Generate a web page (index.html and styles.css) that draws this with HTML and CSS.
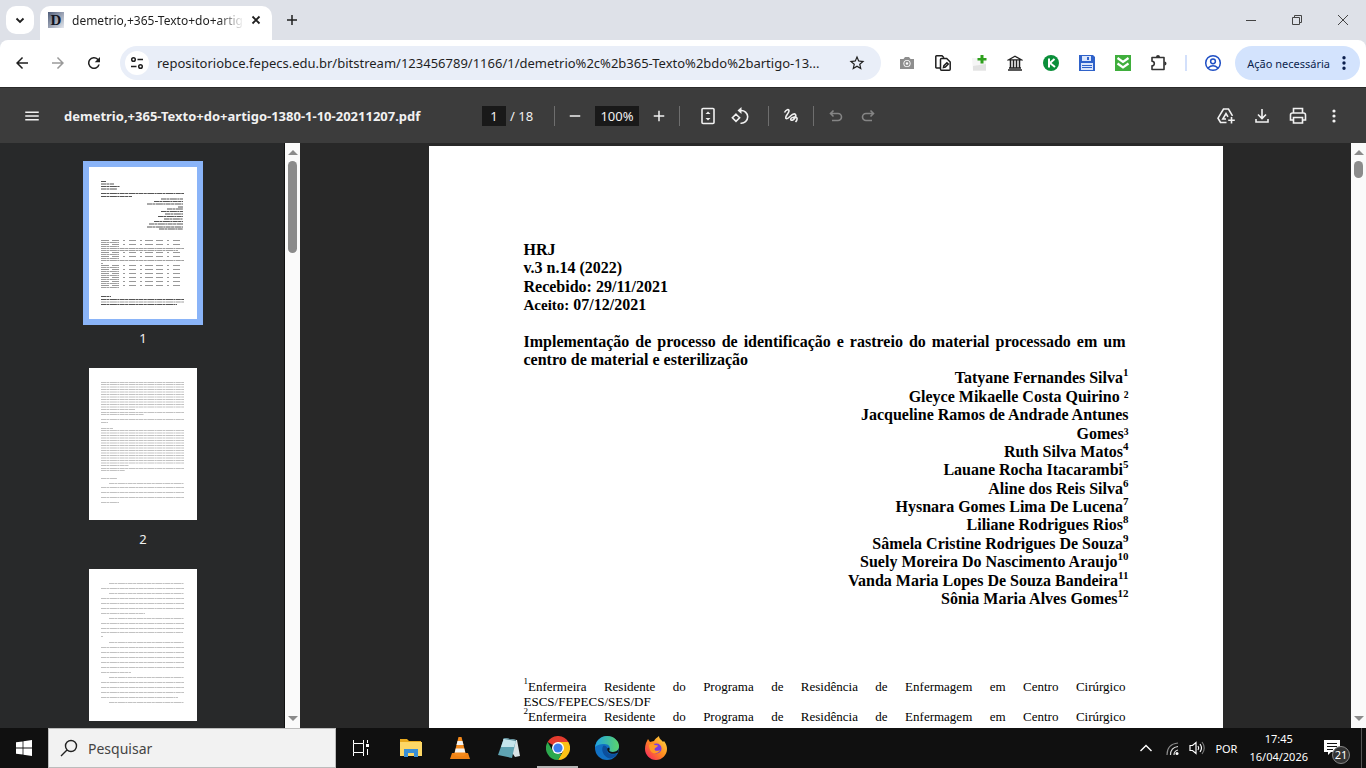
FILE: index.html
```html
<!DOCTYPE html>
<html lang="pt-BR">
<head>
  <meta charset="UTF-8">
  <meta name="viewport" content="width=device-width, initial-scale=1.0">
  <title>demetrio,+365-Texto+do+artigo-1380-1-10-20211207.pdf</title>
  <link rel="stylesheet" href="styles.css">
</head>

<body>
  <!-- Tabs -->
  <header class="tab-strip">
    <button class="tab-search" aria-label="Pesquisar guias">
      <svg width="16" height="16" viewBox="0 0 16 16"><path class="line bold" d="M4.5 6.5 8 10l3.500-3.500"/></svg>
    </button>
    <div class="tab">
      <svg width="16" height="16" viewBox="0 0 16 16">
        <defs>
          <linearGradient id="fav" x1="0" y1="0" x2="1" y2="1">
            <stop offset="0" stop-color="#4d5b78"/>
            <stop offset="1" stop-color="#e6e9ef"/>
          </linearGradient>
        </defs>
        <rect width="16" height="16" fill="url(#fav)"/>
        <text class="favicon-letter" x="8" y="13" text-anchor="middle">D</text>
      </svg>
      <span class="tab-title">demetrio,+365-Texto+do+artig</span>
      <button class="tab-close" aria-label="Fechar">
        <svg width="16" height="16" viewBox="0 0 16 16"><path class="line bold" d="M4.500 4.500l7 7M11.500 4.500l-7 7"/></svg>
      </button>
    </div>
    <button class="new-tab" aria-label="Nova guia">
      <svg width="16" height="16" viewBox="0 0 16 16"><path class="line" d="M8 3v10M3 8h10"/></svg>
    </button>
    <div class="window-controls">
      <button aria-label="Minimizar"><svg width="12" height="12" viewBox="0 0 12 12"><path class="hair" d="M1 6.500h10"/></svg></button>
      <button aria-label="Restaurar"><svg width="12" height="12" viewBox="0 0 12 12"><path class="hair" d="M1.500 3.500h7v7h-7zM3.500 3.500v-2h7v7h-2"/></svg></button>
      <button aria-label="Fechar janela"><svg width="12" height="12" viewBox="0 0 12 12"><path class="hair" d="M1 1l10 10M11 1 1 11"/></svg></button>
    </div>
  </header>

  <!-- Address bar -->
  <nav class="toolbar">
    <button class="tool" aria-label="Voltar"><svg width="18" height="18" viewBox="0 0 24 24"><path d="M20 11H7.830l5.590-5.590L12 4l-8 8 8 8 1.410-1.410L7.830 13H20z"/></svg></button>
    <button class="tool" aria-label="Avançar" disabled><svg width="18" height="18" viewBox="0 0 24 24"><path d="M4 11h12.170l-5.590-5.590L12 4l8 8-8 8-1.410-1.410L16.170 13H4z"/></svg></button>
    <button class="tool" aria-label="Recarregar"><svg width="18" height="18" viewBox="0 0 24 24"><path d="M17.650 6.350A8 8 0 1 0 19.730 14h-2.080A6 6 0 1 1 16.220 7.780L13 11h7V4z"/></svg></button>
    <div class="omnibox">
      <button class="site-info" aria-label="Informações do site">
        <svg width="16" height="16" viewBox="0 0 16 16"><g class="line"><circle cx="4.500" cy="4.500" r="1.800"/><path d="M8.500 4.500H14M2 11.500h5.500"/><circle cx="11.500" cy="11.500" r="1.800"/></g></svg>
      </button>
      <input class="url" type="text" aria-label="Endereço" value="repositoriobce.fepecs.edu.br/bitstream/123456789/1166/1/demetrio%2c%2b365-Texto%2bdo%2bartigo-13...">
      <button class="star" aria-label="Favoritar"><svg width="18" height="18" viewBox="0 0 24 24"><path d="M22 9.240l-7.190-.620L12 2 9.190 8.630 2 9.240l5.460 4.730L5.820 21 12 17.270 18.180 21l-1.630-7.030zM12 15.400l-3.760 2.270 1-4.280-3.320-2.880 4.380-.380L12 6.100l1.710 4.040 4.380.380-3.320 2.880 1 4.280z"/></svg></button>
    </div>
    <button class="tool" aria-label="Captura de tela">
      <svg width="16" height="16" viewBox="0 0 16 16"><path fill="#8e8e8e" d="M1 4h3.500L6 2h4l1.500 2H15v10H1z"/><circle cx="8" cy="8.500" r="3.600" fill="#fff"/><circle cx="8" cy="8.500" r="2" fill="none" stroke="#8e8e8e" stroke-width="1.400"/></svg>
    </button>
    <button class="tool" aria-label="Editar páginas">
      <svg width="18" height="18" viewBox="0 0 18 18"><g class="line"><path d="M6 14H2.500q-.700 0-.700-.700V2.500q0-.700.700-.700H8l2 2"/><path d="M6.500 5.500q0-1 1-1h5.200l3.500 3.500v7.200q0 1-1 1H7.500q-1 0-1-1z"/><path d="M9.500 13.500l.400-1.800 3-3 1.400 1.400-3 3z"/></g></svg>
    </button>
    <button class="tool" aria-label="Adicionar">
      <svg width="18" height="18" viewBox="0 0 18 18"><path fill="#f5f5f5" d="M2 4h14v13H3z"/><path fill="#e2e2e2" d="M3 12l13-2v6.500H3z"/><path fill="#2ea01d" d="M10.500 1h3v3h3v2.500h-3v3h-3v-3h-3V4h3z"/></svg>
    </button>
    <button class="tool" aria-label="Biblioteca">
      <svg width="16" height="16" viewBox="0 0 16 16"><path fill="none" stroke="#222" stroke-width="1.300" d="M1.700 4.800 8 1.200l6.300 3.600z"/><path fill="none" stroke="#222" stroke-width="1.500" d="M3.500 5v8M6.500 5v8M9.500 5v8M12.500 5v8M2 13h12M1 15h14"/></svg>
    </button>
    <button class="tool" aria-label="K">
      <svg width="16" height="16" viewBox="0 0 16 16"><circle cx="8" cy="8" r="8" fill="#0b8f3a"/><path fill="none" stroke="#fff" stroke-width="2" d="M6 3.500v9M11.500 4 7 8l5 4"/></svg>
    </button>
    <button class="tool" aria-label="Salvar">
      <svg width="16" height="16" viewBox="0 0 16 16"><path fill="#2f62c9" d="M0 0h14l2 2v14H0z"/><path fill="#dbe6fb" d="M3 1h9v5H3zM2 8h12v7H2z"/><path fill="#2f62c9" d="M8 2h2v3H8zM3 10h10v1H3zM3 12h10v1H3z"/></svg>
    </button>
    <button class="tool" aria-label="Baixar tudo">
      <svg width="16" height="16" viewBox="0 0 16 16"><rect width="16" height="16" fill="#3fae3c"/><path fill="none" stroke="#fff" stroke-width="2.200" d="M2.500 3 8 7l5.500-4M2.500 8.500 8 12.500l5.500-4"/></svg>
    </button>
    <button class="tool" aria-label="Extensões">
      <svg width="18" height="18" viewBox="0 0 18 18"><path fill="none" stroke="#333" stroke-width="1.600" stroke-linejoin="round" d="M2 3.500h12v12H2v-3.700a2.300 2.300 0 0 0 0-4.600z"/><path fill="#333" d="M6 3a2 2 0 0 1 4 0zM14.500 7.500a2 2 0 0 1 0 4z"/></svg>
    </button>
    <span class="divider"></span>
    <button class="tool" aria-label="Perfil">
      <svg width="18" height="18" viewBox="0 0 18 18"><g fill="none" stroke="#1f4fc4" stroke-width="1.500"><circle cx="9" cy="9" r="7.300"/><circle cx="9" cy="7.300" r="2.400"/><path d="M4 14q5-4.500 10 0"/></g></svg>
    </button>
    <button class="action-needed">
      Ação necessária
      <svg width="4" height="16" viewBox="0 0 4 16"><path fill="#0b1f4d" d="M2 1a1.700 1.700 0 1 1 0 3.400A1.700 1.700 0 0 1 2 1m0 5.300a1.700 1.700 0 1 1 0 3.400 1.700 1.700 0 0 1 0-3.400m0 5.300a1.700 1.700 0 1 1 0 3.400 1.700 1.700 0 0 1 0-3.400"/></svg>
    </button>
  </nav>

  <!-- PDF viewer toolbar -->
  <div class="pdf-bar">
    <div class="pdf-start">
      <button class="pdf-btn" aria-label="Menu"><svg width="18" height="18" viewBox="0 0 24 24"><path d="M3 18h18v-2H3zm0-5h18v-2H3zm0-7v2h18V6z"/></svg></button>
      <span class="pdf-title">demetrio,+365-Texto+do+artigo-1380-1-10-20211207.pdf</span>
    </div>
    <div class="pdf-center">
      <input class="pdf-input page-no" type="text" value="1" aria-label="Número da página">
      <span class="page-total">/ 18</span>
      <span class="sep sep-zoom"></span>
      <button class="pdf-btn" aria-label="Diminuir zoom"><svg width="18" height="18" viewBox="0 0 24 24"><path d="M5 11h14v2H5z"/></svg></button>
      <input class="pdf-input zoom" type="text" value="100%" aria-label="Zoom">
      <button class="pdf-btn" aria-label="Aumentar zoom"><svg width="18" height="18" viewBox="0 0 24 24"><path d="M19 13h-6v6h-2v-6H5v-2h6V5h2v6h6z"/></svg></button>
      <span class="sep sep-fit"></span>
      <button class="pdf-btn" aria-label="Ajustar à página"><svg width="20" height="20" viewBox="0 0 20 20"><rect class="stroke" x="4" y="2.500" width="12" height="15" rx="1"/><path d="M7.500 8 10 5.500 12.500 8zM7.500 12l2.500 2.500 2.500-2.500z"/></svg></button>
      <button class="pdf-btn" aria-label="Girar"><svg width="20" height="20" viewBox="0 0 20 20"><path class="stroke" d="M6 8.200l3.600 3.600L6 15.400l-3.600-3.600zM10.500 4.500a6.400 6.400 0 1 1 0 12.700"/><path d="M11.500 1v7L7.500 4.500z"/></svg></button>
      <span class="sep sep-annotate"></span>
      <button class="pdf-btn" aria-label="Desenhar"><svg width="20" height="20" viewBox="0 0 20 20"><path class="stroke" d="M3.500 6.500C5 3.500 8 2.500 8 5c0 2.500-4.500 5-3 7.500 2.500 2 5.500-6 9-4.500 2.500 2-2 7.500-4 6-1.500-2 3-3.500 5.500-2.500 1.500.800 0 3.500-1 4.500"/></svg></button>
      <span class="sep sep-undo"></span>
      <button class="pdf-btn" aria-label="Desfazer" disabled><svg width="20" height="20" viewBox="0 0 20 20"><path class="stroke" d="M7.500 4.500 4.500 7.500l3 3M4.500 7.500h7.500a3.500 3.500 0 0 1 0 7H6"/></svg></button>
      <button class="pdf-btn" aria-label="Refazer" disabled><svg width="20" height="20" viewBox="0 0 20 20"><path class="stroke" d="M12.500 4.500l3 3-3 3M15.500 7.500H8a3.500 3.500 0 0 0 0 7h6"/></svg></button>
    </div>
    <div class="pdf-end">
      <button class="pdf-btn" aria-label="Salvar no Drive"><svg width="20" height="20" viewBox="0 0 20 20"><path class="stroke" d="M10.500 16.500H4.500L2 12.200 7.500 3h5l4 6.800M10 13H6.800L10 7.500l2 3.300M15.500 11v6.500M12.200 14.200h6.600"/></svg></button>
      <button class="pdf-btn" aria-label="Baixar"><svg width="20" height="20" viewBox="0 0 20 20"><path class="stroke" d="M10 3v9M6 8.500l4 4 4-4M4 13v3h12v-3"/></svg></button>
      <button class="pdf-btn" aria-label="Imprimir"><svg width="20" height="20" viewBox="0 0 20 20"><path class="stroke" d="M5.500 6.500v-4h9v4M5.500 14H2.500V9q0-2 2-2h11q2 0 2 2v5h-3M5.500 11.500h9v5.500h-9z"/></svg></button>
      <button class="pdf-btn" aria-label="Mais ações"><svg width="20" height="20" viewBox="0 0 20 20"><circle cx="10" cy="5" r="1.600"/><circle cx="10" cy="10" r="1.600"/><circle cx="10" cy="15" r="1.600"/></svg></button>
    </div>
  </div>

  <main class="viewer">
    <aside class="sidebar">
      <div class="thumbs">
        <a class="thumb selected" href="#p1">
          <svg class="sheet" viewBox="0 0 108 152">
            <path class="ink dark" d="M12 14.500h5M12 17h13M12 19.500h19M12 22h16M12 26.500h83M12 29.500h31M72 32h22M65 34.500h29M58 37h36M89 40h5M78 42h16M72 44.500h22M76 47h18M69 49.500h25M75 52h19M65 54.500h29M60 57h34M58 60h36M70 62h24"/>
            <path class="ink spaced" d="M12 73.500h83M12 77.500h83M12 85.500h83M12 89.500h83M12 98.500h83M12 102.500h83M12 106.500h83M12 110.500h83M12 114.500h83M12 118.500h83"/>
            <path class="ink mid" d="M12 75.500h18M12 79.500h18M12 81.500h83M12 83.500h77M12 87.500h18M12 91.500h18M12 93.500h83M12 96.500h2M12 100.500h18M12 104.500h18M12 108.500h18M12 112.500h18M12 116.500h18M12 120.500h18"/>
            <path class="ink dark" d="M12 129.500h10M12 132.500h83M12 137.500h76"/>
            <path class="ink mid" d="M12 135h83"/>
          </svg>
          <span class="thumb-no">1</span>
        </a>
        <a class="thumb" href="#p2">
          <svg class="sheet" viewBox="0 0 108 152">
            <path class="ink" d="M12 14.500h83M12 16.500h83M12 19h83M12 21.500h83M12 24h83M12 26.500h83M12 29h83M12 31.500h83M12 34h83M12 36.500h83M12 39h83M12 41.500h34M12 44.500h83M12 46.500h43M12 51.500h83M12 54.500h7M12 60.500h12M12 62.500h83M12 65h83M12 67.500h83M12 70h83M12 72.500h83M12 75h83M12 77.500h83M12 80h83M12 82.500h83M12 85h83M12 87.500h83M12 90h83M12 92.500h83M12 95h83M12 97.500h28M12 100.500h83M12 102.500h24M12 110.500h16M20 115.500h75M12 119.500h83M12 124.500h83M12 129.500h83M12 134.500h18"/>
          </svg>
          <span class="thumb-no">2</span>
        </a>
        <a class="thumb" href="#p3" aria-label="3">
          <svg class="sheet" viewBox="0 0 108 152">
            <path class="ink" d="M20 14.500h75M12 19.500h83M20 24.500h75M12 29.500h83M12 34.500h83M12 39.500h83M12 44.500h44M20 49.500h75M12 54.500h83M12 59.500h83M12 63.500h82M12 67.500h2M20 73.500h75M12 78.500h83M12 83.500h83M12 88.500h83M12 93.500h83M12 98.500h83M12 103.500h30M20 108.500h75M12 113.500h83M12 118.500h83M12 123.500h83M12 128.500h77M20 133.500h75"/>
          </svg>
        </a>
      </div>
      <div class="scrollbar">
        <span class="arrow up"></span>
        <span class="grip grip-long"></span>
        <span class="arrow down"></span>
      </div>
    </aside>

    <section class="stage">
      <article class="page" id="p1">
        <p>HRJ<br>v.3 n.14 (2022)<br>Recebido: 29/11/2021<br><span class="accepted">Aceito:</span> 07/12/2021</p>
        <h1>Implementação de processo de identificação e rastreio do material processado em um centro de material e esterilização</h1>
        <ul class="authors">
          <li>Tatyane Fernandes Silva<sup>1</sup></li>
          <li>Gleyce Mikaelle Costa Quirino ²</li>
          <li>Jacqueline Ramos de Andrade Antunes</li>
          <li>Gomes³</li>
          <li>Ruth Silva Matos<sup>4</sup></li>
          <li>Lauane Rocha Itacarambi<sup>5</sup></li>
          <li>Aline dos Reis Silva<sup>6</sup></li>
          <li>Hysnara Gomes Lima De Lucena<sup>7</sup></li>
          <li>Liliane Rodrigues Rios<sup>8</sup></li>
          <li>Sâmela Cristine Rodrigues De Souza<sup>9</sup></li>
          <li>Suely Moreira Do Nascimento Araujo<sup>10</sup></li>
          <li>Vanda Maria Lopes De Souza Bandeira<sup>11</sup></li>
          <li>Sônia Maria Alves Gomes<sup>12</sup></li>
        </ul>
        <div class="notes">
          <p><span class="spread"><sup>1</sup>Enfermeira Residente do Programa de Residência de Enfermagem em Centro Cirúrgico</span> ESCS/FEPECS/SES/DF</p>
          <p><span class="spread"><sup>2</sup>Enfermeira Residente do Programa de Residência de Enfermagem em Centro Cirúrgico</span> ESCS/FEPECS/SES/DF</p>
        </div>
      </article>
    </section>
    <div class="scrollbar">
      <span class="arrow up"></span>
      <span class="grip grip-short"></span>
      <span class="arrow down"></span>
    </div>
  </main>

  <!-- Windows taskbar -->
  <footer class="taskbar">
    <button class="start" aria-label="Iniciar"><svg width="16" height="16" viewBox="0 0 16 16"><path fill="#fff" d="M0 2.300 6.600 1.400v6.200H0zM7.400 1.300 16 0v7.600H7.400zM0 8.400h6.600v6.200L0 13.700zM7.400 8.400H16V16l-8.600-1.300z"/></svg></button>
    <label class="search">
      <svg width="20" height="20" viewBox="0 0 20 20"><path fill="none" stroke="#222" stroke-width="1.400" d="M8 12 2 18M12 2.500a5.500 5.500 0 1 1 0 11 5.500 5.500 0 0 1 0-11z"/></svg>
      <input type="text" placeholder="Pesquisar" aria-label="Pesquisar">
    </label>
    <button class="task-view" aria-label="Visão de tarefas"><svg width="18" height="18" viewBox="0 0 18 18"><path fill="none" stroke="#fff" d="M1.500 1v3.500h10V1M1.500 17v-3.500h10V17M1.500 4.500v9M11.500 4.500v9M15.500 1v3M15.500 10v6"/><path fill="#fff" d="M14 5h3v3h-3z"/></svg></button>
    <button class="app" aria-label="Explorador de Arquivos"><svg width="24" height="24" viewBox="0 0 24 24"><path fill="#e8a91e" d="M1 3h7l2 2h12v3H1z"/><path fill="#fdd766" d="M1 6h22v14H1z"/><path fill="#3a8fd6" d="M5 13h14v8h-4v-4H9v4H5z"/></svg></button>
    <button class="app" aria-label="VLC"><svg width="24" height="24" viewBox="0 0 24 24"><path fill="#f08113" d="M4 17h16l2 6H2z"/><path fill="#f58a1c" d="M10.500 1h3L18 19q-6 3-12 0z"/><path fill="#f3f3f3" d="M9.500 5h5l1 4h-7zM7.700 12.500h8.600l1 4H6.700z"/></svg></button>
    <button class="app" aria-label="Bloco de notas"><svg width="24" height="24" viewBox="0 0 24 24"><path fill="#d9e3e6" d="M6 3l14 1 3 16-5 1z"/><path fill="#5fa3b2" d="M7 2l12 2-4 18-14-3z"/><path fill="#c5e5ec" d="M7 2l12 2-2 7L4 11z"/><path fill="none" stroke="#4d7f8c" d="M7 2.500l12 2"/></svg></button>
    <button class="app active" aria-label="Google Chrome"><svg width="24" height="24" viewBox="0 0 24 24"><path fill="#e33b2e" d="M12 12 1.600 6A12 12 0 0 1 22.400 6z"/><path fill="#fbc116" d="M12 12V6h10.400A12 12 0 0 1 12 24l5.200-9z"/><path fill="#2da94f" d="M1.600 6 6.800 15 12 18h3.500L12 24A12 12 0 0 1 1.600 6z"/><circle cx="12" cy="12" r="6" fill="#fff"/><circle cx="12" cy="12" r="4.600" fill="#3b7ded"/></svg></button>
    <button class="app" aria-label="Microsoft Edge">
      <svg width="24" height="24" viewBox="0 0 24 24">
        <defs>
          <linearGradient id="edge" x1="0" x2="1"><stop offset="0" stop-color="#1fa3e3"/><stop offset="1" stop-color="#5bd36b"/></linearGradient>
        </defs>
        <circle cx="12" cy="12" r="12" fill="#1271c4"/>
        <path fill="url(#edge)" d="M0 11.500C1 4.500 6 0 12 0c7 0 12 5 12 10 0 4-3 6-6.500 6-2.500 0-4-1-3-2.500C16 11 13.500 8 9.500 8 5 8 1 9.500 0 11.500z"/>
        <path fill="#0c4f9c" d="M8.500 9.500C5.500 13 8 21 15 22.500c4-.500 6.500-3 7.500-5.500-4 2.500-11.500 1.500-10.500-4 .400-2-1-3.500-3.500-3.500z"/>
        <path fill="#111" d="M12.200 13c-.300 4 5.500 6.500 10.800 3.500l1-4.500c-1 3-4 4-6.500 4-2.500 0-4-1-3-2.500.700-2-2-2.500-2.300-.500z"/>
      </svg>
    </button>
    <button class="app" aria-label="Firefox">
      <svg width="24" height="24" viewBox="0 0 24 24">
        <defs>
          <linearGradient id="fox" x1="1" y1="0" x2="0" y2="1"><stop offset="0" stop-color="#ffe14a"/><stop offset=".5" stop-color="#ff8a1e"/><stop offset="1" stop-color="#f5156c"/></linearGradient>
        </defs>
        <path fill="url(#fox)" d="M2 7l2-4 2 3 4-1c1-2 3-3.500 5-5 0 3 3 4 4 6l1-1c2 3 3 5 3 8 0 6-5 11-11 11S1 19 1 13c0-2 .300-4 1-6z"/>
        <circle cx="12.500" cy="12.500" r="5" fill="#7a3be0"/>
        <path fill="#ff9a24" d="M5 9c2-2 4-1.500 6 0l3 .500c0 1.500-3 2-3.500 3.500 0 2 3 2.500 5.500 1-1 3.500-7 4.500-9 1.500C5.500 13.500 5 11 5 9z"/>
      </svg>
    </button>
    <div class="tray">
      <button class="tray-btn" aria-label="Mostrar ícones ocultos"><svg width="14" height="14" viewBox="0 0 14 14"><path fill="none" stroke="#fff" stroke-width="1.400" d="M1.500 10 7 4.500l5.500 5.500"/></svg></button>
      <svg width="16" height="16" viewBox="0 0 16 16"><g fill="none" stroke="#8a8a8a" stroke-width="1.200"><path d="M2 15Q2 4 13 3"/><path stroke="#ddd" d="M5.500 15q0-7.500 7.500-8.500M9 15q0-4 4-5"/></g><circle cx="12" cy="13.500" r="1.500" fill="#fff"/></svg>
      <svg width="16" height="16" viewBox="0 0 16 16"><g fill="none" stroke="#fff" stroke-width="1.200"><path d="M1 5.500h2.500L7 2.500v11l-3.500-3H1zM9 6q1.500 2 0 4M11 4q3 4 0 8"/><path stroke="#777" d="M13 2q4.500 6 0 12"/></g></svg>
      <span class="lang">POR</span>
      <time class="clock">17:45<br>16/04/2026</time>
      <button class="notify" aria-label="Notificações">
        <svg width="16" height="16" viewBox="0 0 16 16"><path fill="#fff" d="M0 0h16v12H7l-3 3v-3H0z"/><path stroke="#111" d="M3 3.500h10M3 6.500h10M3 9.500h6"/></svg>
        <span class="badge">21</span>
      </button>
    </div>
  </footer>
</body>
</html>
```
FILE: styles.css
```css
* {
  box-sizing: border-box;
}

body {
  margin: 0;
  height: 100vh;
  display: flex;
  flex-direction: column;
  overflow: hidden;
  font-family: "Noto Sans", "Segoe UI", sans-serif;
  font-size: 12px;
  color: #1f1f1f;
  background: #dee1e8;
}

button {
  display: flex;
  align-items: center;
  justify-content: center;
  padding: 0;
  border: none;
  background: none;
  font: inherit;
  color: inherit;
}

input {
  border: none;
  padding: 0;
  background: none;
  font: inherit;
  color: inherit;
  min-width: 0;
}

svg {
  display: block;
  flex: none;
  fill: currentColor;
}

.line {
  fill: none;
  stroke: #1f1f1f;
  stroke-width: 1.5;
}

.bold {
  stroke-width: 1.8;
}

.hair {
  fill: none;
  stroke: #444;
  stroke-width: 1;
}

/* tabs */
.tab-strip {
  display: flex;
  align-items: center;
  height: 40px;
  flex: none;
  padding-left: 6px;
}

.tab-search {
  width: 28px;
  height: 28px;
  border-radius: 10px;
  background: #fff;
}

.tab {
  display: flex;
  align-items: center;
  gap: 4px;
  width: 232px;
  height: 34px;
  align-self: flex-end;
  margin-left: 6px;
  padding: 0 8px 6px;
  border-radius: 10px 10px 0 0;
  background: #fff;
}

.favicon-letter {
  font: bold 15px "Liberation Serif", serif;
  fill: #101420;
}

.tab-title {
  flex: 1;
  margin-left: 4px;
  white-space: nowrap;
  -webkit-mask-image: linear-gradient(to right, #000 85%, transparent);
  mask-image: linear-gradient(to right, #000 85%, transparent);
}

.new-tab {
  width: 28px;
  height: 28px;
  margin-left: 6px;
}

.window-controls {
  display: flex;
  margin-left: auto;
}

.window-controls button {
  width: 46px;
  height: 40px;
}

/* address bar */
.toolbar {
  display: flex;
  align-items: center;
  height: 47px;
  flex: none;
  padding: 0 6px 1px 4px;
  border-radius: 8px 8px 0 0;
  background: #fff;
}

.tool {
  width: 36px;
  height: 34px;
}

.tool:disabled {
  color: #9a9a9a;
}

.omnibox {
  display: flex;
  align-items: center;
  flex: 1;
  height: 34px;
  margin: 0 8px;
  padding: 0 15px 0 5px;
  border-radius: 17px;
  background: #e9eef8;
}

.site-info {
  width: 24px;
  height: 24px;
  border-radius: 50%;
  background: #fff;
}

.url {
  flex: 1;
  margin: 0 12px 0 8px;
  font-size: 13px;
}

.divider {
  width: 2px;
  height: 16px;
  margin: 0 8px;
  background: #d3e0fb;
}

.action-needed {
  gap: 12px;
  height: 34px;
  margin-left: 4px;
  padding: 0 14px 0 12px;
  border-radius: 17px;
  background: #d3e3fd;
  color: #0b1f4d;
  font-size: 11px;
}

/* pdf toolbar */
.pdf-bar {
  display: flex;
  align-items: center;
  height: 56px;
  flex: none;
  padding: 0 16px;
  background: #3c3c3c;
  border-top: 1px solid #2a2a2a;
  color: #f1f1f1;
}

.pdf-start,
.pdf-end {
  display: flex;
  align-items: center;
  flex: 1;
  min-width: 0;
}

.pdf-end {
  justify-content: flex-end;
  gap: 4px;
}

.pdf-title {
  margin-left: 16px;
  font-weight: 700;
  font-size: 13px;
  white-space: nowrap;
}

.pdf-center {
  display: flex;
  align-items: center;
}

.pdf-btn {
  width: 32px;
  height: 32px;
}

.pdf-btn:disabled {
  color: #858585;
}

.stroke {
  fill: none;
  stroke: currentColor;
  stroke-width: 1.6;
}

.pdf-input {
  height: 20px;
  background: #191919;
  text-align: center;
  font-size: 13px;
}

.page-no {
  width: 24px;
}

.zoom {
  width: 44px;
  margin: 0 4px;
}

.page-total {
  width: 24px;
  margin-left: 4px;
  font-size: 13px;
  white-space: nowrap;
}

.sep {
  width: 1px;
  height: 20px;
  background: #6e6e6e;
}

.sep-zoom {
  margin: 0 4px 0 20px;
}

.sep-fit {
  margin: 0 12px 0 4px;
}

.sep-annotate {
  margin: 0 6px 0 12px;
}

.sep-undo {
  margin: 0 6px;
}

/* viewer */
.viewer {
  display: flex;
  flex: 1;
  min-height: 0;
  background: #282828;
}

.sidebar {
  display: flex;
  width: 300px;
  flex: none;
  background: #28292a;
}

.thumbs {
  flex: 1;
  overflow: hidden;
  padding: 18px 0 0 2px;
  border-right: 1px solid #111;
}

.thumb {
  display: block;
  width: 120px;
  height: 201px;
  margin: 0 auto;
  color: #f1f1f1;
  text-align: center;
  text-decoration: none;
}

.sheet {
  width: 120px;
  height: 164px;
  border: 6px solid transparent;
  background: #fff content-box;
  background-clip: padding-box;
}

.selected .sheet {
  border-color: #8ab4f8;
}

.thumb-no {
  display: block;
  font-size: 13px;
  line-height: 26px;
}

.ink {
  fill: none;
  stroke: #c2c2c2;
  stroke-width: 1;
  stroke-dasharray: 5 0.4 3 0.5 7 0.4 2 0.4;
}

.ink.mid {
  stroke: #a0a0a0;
}

.ink.dark {
  stroke: #555;
}

.ink.spaced {
  stroke: #999;
  stroke-dasharray: 8 3 7 4 2 4 7 4 2 3;
}

.scrollbar {
  display: flex;
  flex-direction: column;
  align-items: center;
  width: 15px;
  flex: none;
  padding: 7px 0;
  background: #fafafa;
}

.arrow {
  border: 5px solid transparent;
}

.up {
  border-top: none;
  border-bottom-color: #8b8b8b;
}

.down {
  margin-top: auto;
  border-bottom: none;
  border-top-color: #8b8b8b;
}

.grip {
  width: 9px;
  margin-top: 6px;
  border-radius: 5px;
  background: #8b8b8b;
}

.grip-long {
  height: 92px;
}

.grip-short {
  height: 17px;
}

.stage {
  flex: 1;
  overflow: hidden;
  padding-top: 3px;
}

.page {
  width: 794px;
  min-height: 1123px;
  margin: 0 auto;
  padding: 95px 94px 95px 95px;
  background: #fff;
  color: #000;
  font-family: "Liberation Serif", "Times New Roman", serif;
  font-size: 16px;
  font-weight: bold;
  line-height: 1.15;
}

.page p {
  margin: 0;
}

.page h1 {
  margin: 18px 3px 0 0;
  font-size: 16px;
  text-align: justify;
}

.page sup {
  font-size: 11px;
  line-height: 0;
  vertical-align: 7px;
}

.accepted {
  font-size: 15px;
}

.authors {
  margin: 0;
  padding: 0;
  list-style: none;
  text-align: right;
}

.page .notes {
  margin: 71px 3px 0 0;
  font-size: 13px;
  font-weight: normal;
  line-height: 15px;
}

.page .notes sup {
  font-size: 9px;
}

.spread {
  display: block;
  text-align: justify;
  text-align-last: justify;
}

/* taskbar */
.taskbar {
  display: flex;
  height: 40px;
  flex: none;
  background: #101010;
  color: #fff;
}

.start {
  width: 48px;
}

.search {
  display: flex;
  align-items: center;
  gap: 9px;
  width: 288px;
  padding: 0 10px;
  border: 1px solid #bcbcbc;
  background: #f2f2f2;
  color: #444;
}

.search input {
  flex: 1;
  font-size: 14px;
}

.search input::placeholder {
  color: #444;
}

.task-view {
  width: 50px;
}

.app {
  width: 49px;
  padding-top: 2px;
  border: 0 solid transparent;
  border-bottom-width: 2px;
}

.active {
  width: 41px;
  margin: 0 4px;
  border-color: #b4b4b4;
}

.tray {
  display: flex;
  align-items: center;
  gap: 8px;
  margin-left: auto;
  padding-right: 4px;
  font-size: 11px;
}

.tray-btn {
  width: 22px;
  height: 40px;
}

.lang {
  margin-left: 2px;
}

.clock {
  margin-left: 4px;
  line-height: 18px;
  text-align: center;
}

.notify {
  position: relative;
  width: 46px;
  height: 40px;
  padding-right: 14px;
  border-right: 1px solid #555;
}

.badge {
  position: absolute;
  right: 11px;
  bottom: 4px;
  width: 18px;
  height: 18px;
  border: 1px solid #888;
  border-radius: 50%;
  background: #333;
  line-height: 16px;
}
```
